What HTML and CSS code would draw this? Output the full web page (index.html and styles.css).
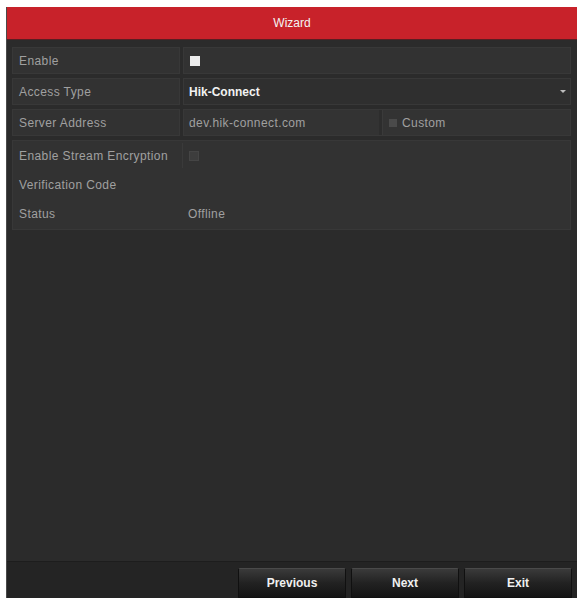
FILE: index.html
```html
<!DOCTYPE html>
<html>
<head>
<meta charset="utf-8">
<link rel="stylesheet" href="styles.css">
</head>
<body>
<div class="panel">
  <div class="header">Wizard</div>
  <div class="content">
    <div class="row">
      <div class="cell label">Enable</div>
      <div class="cell value"><span class="check check-on"></span></div>
    </div>
    <div class="row">
      <div class="cell label">Access Type</div>
      <div class="cell value select"><span class="strong">Hik-Connect</span><span class="arrow"></span></div>
    </div>
    <div class="row">
      <div class="cell label">Server Address</div>
      <div class="cell value split">
        <div class="sub">dev.hik-connect.com</div>
        <div class="sub sub-custom"><span class="check check-mini"></span>Custom</div>
      </div>
    </div>
    <div class="group">
      <div class="grow">
        <div class="glabel glabel-box">Enable Stream Encryption</div>
        <div class="gvalue"><span class="check check-off"></span></div>
      </div>
      <div class="grow">
        <div class="glabel">Verification Code</div>
        <div class="gvalue"></div>
      </div>
      <div class="grow">
        <div class="glabel">Status</div>
        <div class="gvalue">Offline</div>
      </div>
    </div>
  </div>
  <div class="footer">
    <button class="btn">Previous</button>
    <button class="btn">Next</button>
    <button class="btn">Exit</button>
  </div>
</div>
</body>
</html>
```
FILE: styles.css
```css
html, body {
  margin: 0;
  padding: 0;
  background: #ffffff;
}
body {
  font-family: "Liberation Sans", Arial, sans-serif;
  font-size: 12px;
}
.panel {
  margin: 7px 0 0 6px;
  width: 571px;
  height: 591px;
  background: #2b2b2b;
  border-left: 1px solid #4a4a4a;
  box-sizing: border-box;
  display: flex;
  flex-direction: column;
}
.header {
  height: 33px;
  background: #c8222a;
  color: #f4f4f4;
  display: flex;
  align-items: center;
  justify-content: center;
  font-size: 12px;
  border-bottom: 1px solid #5a1e22;
  box-sizing: border-box;
}
.content {
  flex: 1;
  padding: 7px 6px 0 5px;
  display: flex;
  flex-direction: column;
  gap: 4px;
}
.row {
  display: grid;
  grid-template-columns: 168px 1fr;
  gap: 3px;
  height: 27px;
}
.cell {
  background: #323232;
  border: 1px solid #383838;
  display: flex;
  align-items: center;
  padding-left: 6px;
  color: #a0a0a0;
  letter-spacing: 0.4px;
}
.value {
  padding-left: 5px;
}
.select {
  justify-content: space-between;
  padding-right: 4px;
  background: #2f2f2f;
}
.strong {
  color: #f2f2f2;
  font-weight: bold;
  letter-spacing: 0;
}
.arrow {
  width: 0;
  height: 0;
  border-left: 3px solid transparent;
  border-right: 3px solid transparent;
  border-top: 3px solid #bdbdbd;
}
.split {
  padding: 0;
  display: grid;
  grid-template-columns: 195px 1fr;
  gap: 3px;
  background: #2d2d2d;
}
.sub {
  display: flex;
  align-items: center;
  padding-left: 5px;
  height: 100%;
  background: #333333;
}
.sub-custom {
  border-left: 1px solid #3a3a3a;
  padding-left: 6px;
  gap: 5px;
}
.check {
  display: inline-block;
  width: 10px;
  height: 10px;
  box-sizing: border-box;
}
.check-on {
  background: #ececec;
  margin-left: 1px;
}
.check-off {
  background: #3d3d3d;
  border: 1px solid #454545;
  margin-left: 1px;
}
.check-mini {
  width: 8px;
  height: 8px;
  background: #4a4a4a;
}
.group {
  background: #323232;
  border: 1px solid #383838;
  height: 90px;
  display: flex;
  flex-direction: column;
  box-sizing: border-box;
}
.grow {
  display: grid;
  grid-template-columns: 170px 1fr;
  height: 29px;
  align-items: center;
  color: #a0a0a0;
  letter-spacing: 0.4px;
}
.glabel {
  padding-left: 6px;
  height: 100%;
  display: flex;
  align-items: center;
}
.glabel-box {
  border-right: 1px solid #3a3a3a;
  height: 25px;
}
.gvalue {
  padding-left: 5px;
  display: flex;
  align-items: center;
}
.footer {
  height: 36px;
  background: #242424;
  border-top: 1px solid #1d1d1d;
  display: flex;
  justify-content: flex-end;
  align-items: flex-end;
  gap: 5px;
  padding-right: 5px;
}
.btn {
  width: 108px;
  height: 30px;
  background: linear-gradient(#3a3a3a, #222222 50%, #141414);
  border: 1px solid #101010;
  border-top-color: #4a4a4a;
  border-radius: 2px 2px 0 0;
  color: #f0f0f0;
  font-family: "Liberation Sans", Arial, sans-serif;
  font-weight: bold;
  font-size: 12px;
  padding: 0;
}
```
